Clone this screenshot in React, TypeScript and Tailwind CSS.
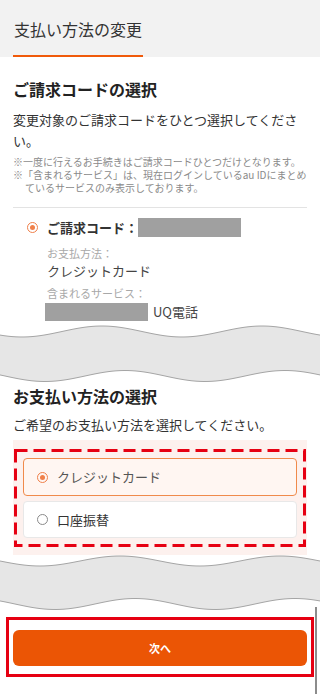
import React from "react";

type WP = { c: number; A: number; p: number };

function pts(w: WP): [number, number][] {
  const out: [number, number][] = [];
  for (let x = 0; x <= 320; x += 4) {
    out.push([x, w.c + w.A * Math.cos((2 * Math.PI * (x - w.p)) / 160)]);
  }
  return out;
}

function Wave({ h, top, bottom }: { h: number; top: WP; bottom: WP }) {
  const t = pts(top);
  const b = pts(bottom);
  const toD = (p: [number, number][]) =>
    p.map((q, i) => `${i ? "L" : "M"}${q[0]} ${q[1].toFixed(2)}`).join(" ");
  const fill =
    toD(t) +
    " " +
    [...b]
      .reverse()
      .map((q) => `L${q[0]} ${q[1].toFixed(2)}`)
      .join(" ") +
    " Z";
  return (
    <svg width="320" height={h} viewBox={`0 0 320 ${h}`} className="block">
      <path d={fill} fill="#e6e6e6" />
      <path d={toD(t)} fill="none" stroke="#a5a5a5" strokeWidth="1" />
      <path d={toD(b)} fill="none" stroke="#a5a5a5" strokeWidth="1" />
    </svg>
  );
}

function Radio({ checked }: { checked?: boolean }) {
  if (checked) {
    return (
      <span className="flex h-[11px] w-[11px] shrink-0 items-center justify-center rounded-full border-[1.5px] border-[#f0804a]">
        <span className="h-[5px] w-[5px] rounded-full bg-[#f0804a]" />
      </span>
    );
  }
  return <span className="h-[11px] w-[11px] shrink-0 rounded-full border border-[#8a8a8a] bg-white" />;
}

export default function App() {
  return (
    <div className="relative min-h-[694px] w-[320px] bg-white font-['Noto_Sans_CJK_JP',sans-serif] text-[#333]">
      {/* header */}
      <div className="flex h-[57px] bg-[#f2f2f2] px-[13px]">
        <div className="flex h-full items-center border-b-2 border-[#f05a0a] px-px pt-[2px] text-[16px] leading-[24px] text-[#333]">
          支払い方法の変更
        </div>
      </div>

      {/* section 1 */}
      <div className="px-[13px]">
        <h2 className="mt-[20px] text-[16px] font-bold leading-[24px] text-[#222]">ご請求コードの選択</h2>
        <p className="mt-[8px] text-[13px] leading-[21px] text-[#333]">
          変更対象のご請求コードをひとつ選択してください。
        </p>
        <div className="mt-[4px] text-[10px] leading-[13px] text-[#8a8a8a]">
          <div className="whitespace-nowrap">※一度に行えるお手続きはご請求コードひとつだけとなります。</div>
          <div className="whitespace-nowrap">※「含まれるサービス」は、現在ログインしているau IDにまとめ</div>
          <div className="whitespace-nowrap pl-[12px]">ているサービスのみ表示しております。</div>
        </div>
        <div className="mt-[13px] border-t border-[#e3e3e3] pl-[14px] pt-[10px]">
          <div className="flex h-[19px] items-center">
            <Radio checked />
            <span className="ml-[9px] text-[13px] font-bold leading-[19px] text-[#333]">ご請求コード：</span>
            <span className="h-[19px] w-[103px] bg-[#a0a0a0]" />
          </div>
          <div className="pl-[20px]">
            <div className="mt-[8px] text-[11px] leading-[16px] text-[#a8a8a8]">お支払方法：</div>
            <div className="text-[13px] leading-[20px] text-[#444]">クレジットカード</div>
            <div className="mt-[4px] text-[11px] leading-[16px] text-[#a8a8a8]">含まれるサービス：</div>
            <div className="mt-[2px] flex h-[18px] items-center">
              <span className="-ml-[2px] h-[18px] w-[103px] bg-[#a0a0a0]" />
              <span className="ml-[5px] text-[13px] leading-[18px] text-[#444]">UQ電話</span>
            </div>
          </div>
        </div>
      </div>

      <div className="mt-px">
        <Wave h={62} top={{ c: 9.5, A: 5.5, p: 22 }} bottom={{ c: 54, A: 5.5, p: 45 }} />
      </div>

      {/* section 2 */}
      <div className="px-[13px]">
        <h2 className="text-[16px] font-bold leading-[24px] text-[#222]">お支払い方法の選択</h2>
        <p className="mt-[6px] text-[13px] leading-[21px] text-[#333]">ご希望のお支払い方法を選択してください。</p>
        <div className="relative mt-[5px] bg-[#fdf1ee] px-[10px] pb-[17px] pt-[18px]">
          <div className="flex h-[38px] items-center rounded-[4px] border border-[#f08a4b] bg-[#fff6f2] pl-[13px]">
            <Radio checked />
            <span className="ml-[9px] text-[13px] text-[#555]">クレジットカード</span>
          </div>
          <div className="mt-[5px] flex h-[37px] items-center rounded-[4px] border border-[#e8e8e8] bg-white pl-[13px]">
            <Radio />
            <span className="ml-[9px] text-[13px] text-[#333]">口座振替</span>
          </div>
          <svg className="pointer-events-none absolute inset-0 h-full w-full" viewBox="0 0 294 115" preserveAspectRatio="none">
            <rect x="2.5" y="10.5" width="289" height="95" fill="none" stroke="#e60012" strokeWidth="3" strokeDasharray="12 6" />
          </svg>
        </div>
      </div>

      <Wave h={57} top={{ c: 6, A: 5, p: 40 }} bottom={{ c: 49, A: 5.5, p: 55 }} />

      {/* footer button */}
      <div className="px-[13px] pt-[18px]">
        <div className="relative">
          <button className="flex h-[36px] w-full items-center justify-center rounded-[6px] bg-[#eb5505] text-[11px] font-bold text-white">
            次へ
          </button>
          <div className="pointer-events-none absolute -bottom-[11px] -left-[7px] -right-[7px] -top-[13px] border-[3px] border-[#e60012]" />
        </div>
      </div>

      {/* scrollbar */}
      <div className="absolute bottom-0 right-[3px] top-[607px] w-[2px] bg-[#8c8c8c]" />
    </div>
  );
}
